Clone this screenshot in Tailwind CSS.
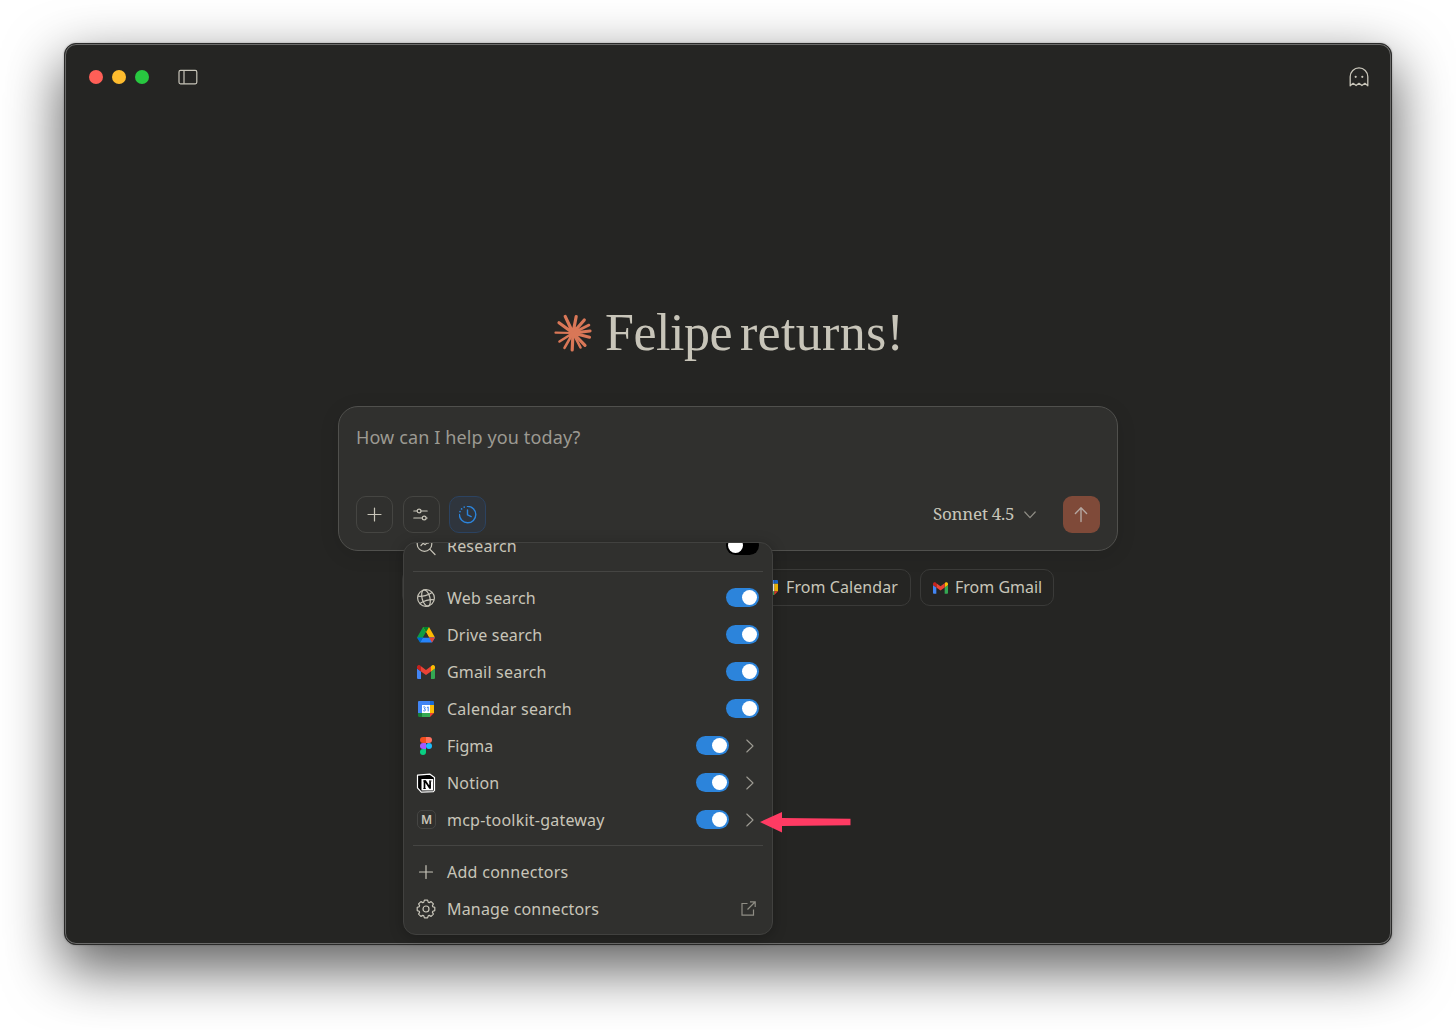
<!DOCTYPE html>
<html lang="en">
<head>
  <meta charset="UTF-8">
  <meta name="viewport" content="width=device-width, initial-scale=1.0">
  <title>Claude</title>
  <script src="https://cdn.jsdelivr.net/npm/@tailwindcss/browser@4"></script>
</head>
<body class="bg-white h-[1030px] overflow-hidden pt-[43px] pl-[64px] font-['Noto_Sans',sans-serif] text-[#c8c5b9]">
  <!-- Shared icons -->
  <svg class="hidden">
    <symbol id="gmail" viewBox="0 0 18 14">
      <path fill="#4285f4" d="M1.3 14H4V6.4L0 3.5v9.2C0 13.4.6 14 1.3 14z"/>
      <path fill="#34a853" d="M14 14h2.7c.7 0 1.3-.6 1.3-1.3V3.5l-4 2.9z"/>
      <path fill="#fbbc04" d="M14 1.3v5.1l4-2.9V2c0-1.7-1.900-2.600-3.200-1.600z"/>
      <path fill="#ea4335" d="M4 6.400V1.300l5 3.700 5-3.700v5.100l-5 3.700z"/>
      <path fill="#c5221f" d="M0 2v1.500l4 2.900V1.300L3.200.4C1.900-.6 0 .3 0 2z"/>
    </symbol>
    <symbol id="calendar" viewBox="0 0 16 16">
      <path fill="#4285f4" d="M1.200 0H12v4H4v8H0V1.200C0 .5.5 0 1.200 0z"/>
      <path fill="#1967d2" d="M12 0h2.800C15.500 0 16 .5 16 1.200V4h-4z"/>
      <path fill="#fbbc04" d="M12 4h4v8h-4z"/>
      <path fill="#34a853" d="M4 12h8v4H4z"/>
      <path fill="#188038" d="M0 12h4v4H1.200C.5 16 0 15.500 0 14.800z"/>
      <path fill="#ea4335" d="M12 12h4l-4 4z"/>
      <path fill="#fff" d="M4 4h8v8H4z"/>
      <path fill="none" stroke="#4285f4" stroke-width="1" d="M5.200 6.300c.5-.8 2.100-.7 2.100.4 0 .8-.7 1.100-1.300 1.100.8 0 1.500.4 1.500 1.200 0 1.200-1.900 1.300-2.400.3M8.900 6.700l1.300-.8V10.400"/>
    </symbol>
    <symbol id="chevron" viewBox="0 0 8 14">
      <path fill="none" stroke="currentColor" stroke-width="1.100" stroke-linecap="round" stroke-linejoin="round" d="M.8 1 7 7 .8 13"/>
    </symbol>
  </svg>

  <div class="relative w-[1328px] h-[902px] rounded-[12px] bg-[#252523] border border-[#2a2a29] shadow-[inset_0_0_0_1px_#6b6b6a,0_0_2px_rgba(0,0,0,0.3),0_22px_56px_3px_rgba(0,0,0,0.62)] flex flex-col">
    <!-- Title bar -->
    <header class="flex items-center h-[65px] pl-[24px] pr-[22px]">
      <div class="flex gap-[9px]">
        <span class="size-[14px] rounded-full bg-[#ff5f57]"></span>
        <span class="size-[14px] rounded-full bg-[#febc2e]"></span>
        <span class="size-[14px] rounded-full bg-[#28c840]"></span>
      </div>
      <svg class="ml-[28.500px] w-[20px] h-[16px]" viewBox="0 0 20 16" fill="none" stroke="#c8c5b9" stroke-width="1.200">
        <rect x="1" y="1.400" width="17.800" height="13.400" rx="1.500"/>
        <path d="M6 1.400v13.400"/>
      </svg>
      <svg class="ml-auto w-[20px] h-[20px]" viewBox="0 0 20 20" fill="none" stroke="#c8c5b9" stroke-width="1.300" stroke-linejoin="round">
        <path d="M1.200 18.800V9.700a8.800 8.800 0 0 1 17.600 0v9.100l-2.900-2.500-3 2.300-2.900-2.300-2.900 2.300-3-2.300z"/>
        <circle cx="6.700" cy="9.800" r="1.100" fill="#c8c5b9" stroke="none"/>
        <circle cx="13.300" cy="9.800" r="1.100" fill="#c8c5b9" stroke="none"/>
      </svg>
    </header>

    <main class="flex flex-col items-center">
      <!-- Greeting -->
      <div class="mt-[194px] h-[60px] w-[348px] flex items-center">
        <svg class="size-[38px] shrink-0 -mt-px" viewBox="0 0 38 38" stroke="#d97757" stroke-width="3.200" stroke-linecap="round">
          <path d="M19 19 1.500 18.700" stroke-width="2.200"/>
          <path d="M19 19 5 8.800M19 19 11.200 2.400M19 19 22.200 2.500M19 19 30.300 6M19 19 36 17M19 19 35.500 23.200M19 19 31 31.400M19 19 18.200 36"/>
          <path d="M19 19 35 11M19 19 26.500 33.500M19 19 10.500 33.800M19 19 5.500 27.500" stroke-width="2.600"/>
        </svg>
        <h1 class="ml-[13px] flex gap-[8px] whitespace-nowrap font-['Liberation_Serif',serif] text-[52px] leading-[60px]">
          <span class="tracking-[-0.500px]">Felipe</span>
          <span class="tracking-[0.300px]">returns!</span>
        </h1>
      </div>

      <!-- Composer -->
      <div class="mt-[43px] w-[780px] h-[145px] rounded-[20px] bg-[#30302e] border border-[#50504d] shadow-[0_4px_20px_rgba(0,0,0,0.1)] flex flex-col px-[17px] pt-[17px] pb-[17px]">
        <p class="text-[18px] leading-[26px] tracking-[0.120px] text-[#9c9a92]">How can I help you today?</p>
        <div class="mt-auto flex items-center">
          <div class="flex gap-[9.500px]">
            <button class="size-[37px] rounded-[10px] border border-[#454542] flex items-center justify-center">
              <svg class="size-[16px]" viewBox="0 0 16 16" stroke="#c8c5b9" stroke-width="1.200" stroke-linecap="round"><path d="M7.500 1v13M1 7.500h13"/></svg>
            </button>
            <button class="size-[37px] rounded-[10px] border border-[#454542] flex items-center justify-center">
              <svg class="size-[16px]" viewBox="0 0 16 16" fill="none" stroke="#c8c5b9" stroke-width="1.200" stroke-linecap="round">
                <path d="M.8 4h3.300M8.100 4h6.100M.8 11h8.400M13.200 11h1"/>
                <circle cx="6.100" cy="4" r="1.900"/>
                <circle cx="11.200" cy="11" r="1.900"/>
              </svg>
            </button>
            <button class="size-[37px] rounded-[10px] border border-[#2c4361] bg-[#2f353d] flex items-center justify-center">
              <svg class="size-[18px]" viewBox="0.5 0.5 18 18" fill="none" stroke="#2c84db" stroke-width="1.400" stroke-linecap="round">
                <path d="M9 .9A8.200 8.200 0 1 1 .9 9"/>
                <path d="M9 4.500V9.300l3.700 1.800"/>
                <path d="M1.500 6.100v0M3.100 3.400v0M5.700 1.600v0" stroke-width="1.700"/>
              </svg>
            </button>
          </div>
          <span class="ml-auto w-[81px] -mt-[2px] whitespace-nowrap font-['Noto_Serif','Liberation_Serif',serif] text-[17px] tracking-[-0.240px] leading-6">Sonnet 4.5</span>
          <svg class="ml-[10px] w-[12px] h-[8px]" viewBox="0 0 12 8" fill="none" stroke="#8f8d85" stroke-width="1.200" stroke-linecap="round" stroke-linejoin="round"><path d="M.8 1 6 6.700 11.200 1"/></svg>
          <button class="ml-[27px] size-[37px] rounded-[9px] bg-[#7f4a39] flex items-center justify-center">
            <svg class="-ml-px w-[14px] h-[16px]" viewBox="0 0 14 16" fill="none" stroke="#b5a7a1" stroke-width="1.400" stroke-linecap="round" stroke-linejoin="round"><path d="M7 14.500V1M1.400 6.500 7 .8l5.600 5.700"/></svg>
          </button>
        </div>
      </div>

      <!-- Suggestions -->
      <div class="mt-[18px] w-[652px] flex gap-[9px] text-[16px] leading-[22px] whitespace-nowrap">
        <div class="flex-1 h-[37px] rounded-[10px] border border-[#3a3a38]"></div>
        <div class="w-[160px] h-[37px] rounded-[10px] border border-[#3a3a38] flex items-center pl-[11px]">
          <svg class="size-[15px] mr-[8px]"><use href="#calendar"/></svg>
          <span class="-mt-[2px] tracking-[0.080px]">From Calendar</span>
        </div>
        <div class="w-[134px] h-[37px] rounded-[10px] border border-[#3a3a38] flex items-center pl-[11.500px]">
          <svg class="w-[15px] h-[12px] mr-[7.500px]"><use href="#gmail"/></svg>
          <span class="-mt-[2px]">From Gmail</span>
        </div>
      </div>
    </main>

    <!-- Connectors menu -->
    <div class="absolute left-[338px] top-[498px] w-[370px] h-[393px] rounded-[13px] bg-[#30302e] border border-[#41413f] overflow-hidden shadow-[0_2px_14px_rgba(0,0,0,0.25)] text-[16px] tracking-[0.180px] whitespace-nowrap">
      <div class="-mt-[16px] flex flex-col">
        <div class="h-[37px] flex items-center pl-[12px] pr-[13px]">
          <svg class="size-[20px] mr-[11px]" viewBox="0 0 20 20" fill="none" stroke="#c8c5b9" stroke-width="1.200" stroke-linecap="round" stroke-linejoin="round"><circle cx="8.500" cy="8" r="7.300"/><path d="m14 13.300 5 5.200M5 9.500l2.200-2.300 2 1.500 2.800-3M9.800 5.500H12v2"/></svg>
          <span>Research</span>
          <span class="ml-auto w-[33px] h-[19px] rounded-full bg-black flex items-center px-[2px]"><span class="size-[15px] rounded-full bg-white"></span></span>
        </div>
        <div class="h-px mx-[9px] my-[7px] bg-[#454543]"></div>
        <div class="h-[37px] flex items-center pl-[12px] pr-[13px]">
          <svg class="size-[20px] mr-[11px]" viewBox="0 0 20 20" fill="none" stroke="#c8c5b9" stroke-width="1.200"><circle cx="10" cy="10" r="8.400"/><g transform="rotate(-15 10 10)"><ellipse cx="10" cy="10" rx="3.900" ry="8.400"/><path d="M2.700 6.200c4 1.700 10.600 1.700 14.600 0M2.700 13.800c4-1.700 10.600-1.700 14.600 0"/></g></svg>
          <span>Web search</span>
          <span class="ml-auto w-[33px] h-[19px] rounded-full bg-[#2c84db] flex items-center justify-end px-[2px]"><span class="size-[15px] rounded-full bg-white"></span></span>
        </div>
        <div class="h-[37px] flex items-center pl-[13px] pr-[13px]">
          <svg class="w-[18px] h-[16px] mr-[12px]" viewBox="0 0 18 16"><path fill="#0f9d43" d="M6 0h6L9 5.300 3.200 15.600 0 10.400z"/><path fill="#ffba00" d="M6 0h6l6 10.400h-6z"/><path fill="#2684fc" d="M5.900 10.400H18l-3 5.200H3z"/><path fill="#00832d" d="M6 0h6L9 5.300z"/><path fill="#ea4335" d="M12 10.400h6l-3 5.200z"/><path fill="#0066da" d="M0 10.400h6l-3 5.200z"/><path fill="#30302e" d="m9 5.300 3 5.100H6z"/></svg>
          <span>Drive search</span>
          <span class="ml-auto w-[33px] h-[19px] rounded-full bg-[#2c84db] flex items-center justify-end px-[2px]"><span class="size-[15px] rounded-full bg-white"></span></span>
        </div>
        <div class="h-[37px] flex items-center pl-[13px] pr-[13px]">
          <svg class="w-[18px] h-[14px] mr-[12px]"><use href="#gmail"/></svg>
          <span>Gmail search</span>
          <span class="ml-auto w-[33px] h-[19px] rounded-full bg-[#2c84db] flex items-center justify-end px-[2px]"><span class="size-[15px] rounded-full bg-white"></span></span>
        </div>
        <div class="h-[37px] flex items-center pl-[14px] pr-[13px]">
          <svg class="size-[16px] mr-[13px]"><use href="#calendar"/></svg>
          <span class="tracking-[0.250px]">Calendar search</span>
          <span class="ml-auto w-[33px] h-[19px] rounded-full bg-[#2c84db] flex items-center justify-end px-[2px]"><span class="size-[15px] rounded-full bg-white"></span></span>
        </div>
        <div class="h-[37px] flex items-center pl-[16px] pr-[18px]">
          <svg class="w-[12px] h-[18px] mr-[15px]" viewBox="0 0 12 18"><path fill="#f24e1e" d="M3 0h3v6H3a3 3 0 0 1 0-6z"/><path fill="#ff7262" d="M6 0h3a3 3 0 0 1 0 6H6z"/><path fill="#a259ff" d="M3 6h3v6H3a3 3 0 0 1 0-6z"/><circle fill="#1abcfe" cx="9" cy="9" r="3"/><path fill="#0acf83" d="M3 12h3v3a3 3 0 1 1-3-3z"/></svg>
          <span class="tracking-normal">Figma</span>
          <span class="ml-auto w-[33px] h-[19px] rounded-full bg-[#2c84db] flex items-center justify-end px-[2px]"><span class="size-[15px] rounded-full bg-white"></span></span>
          <svg class="ml-[17px] w-[8px] h-[14px] text-[#9c9a92]"><use href="#chevron"/></svg>
        </div>
        <div class="h-[37px] flex items-center pl-[12px] pr-[18px]">
          <svg class="size-[20px] mr-[11px]" viewBox="0 0 20 20"><path fill="#000" stroke="#fff" stroke-width="1.200" stroke-linejoin="round" d="M1.500 2.200 14 1.200l4.500 3.200v13l-1.200 1.300-12 .5-3.800-4.400z"/><path fill="#fff" d="M5.500 6.100h11.700v11.400H5.500z"/><path fill="none" stroke="#000" stroke-width="1.700" d="M8.500 15.300V8.200h.9l4.300 6.600h.4V8.200"/><path stroke="#000" stroke-width="1" d="M7.300 8h2.300M7.300 15.500h2.500M13 8h2.500"/></svg>
          <span>Notion</span>
          <span class="ml-auto w-[33px] h-[19px] rounded-full bg-[#2c84db] flex items-center justify-end px-[2px]"><span class="size-[15px] rounded-full bg-white"></span></span>
          <svg class="ml-[17px] w-[8px] h-[14px] text-[#9c9a92]"><use href="#chevron"/></svg>
        </div>
        <div class="h-[37px] flex items-center pl-[13px] pr-[18px]">
          <span class="size-[19px] mr-[11px] rounded-[5px] border border-[#454543] flex items-center justify-center text-[12px] tracking-normal font-semibold leading-none">M</span>
          <span class="tracking-[0.220px]">mcp-toolkit-gateway</span>
          <span class="ml-auto w-[33px] h-[19px] rounded-full bg-[#2c84db] flex items-center justify-end px-[2px]"><span class="size-[15px] rounded-full bg-white"></span></span>
          <svg class="ml-[17px] w-[8px] h-[14px] text-[#9c9a92]"><use href="#chevron"/></svg>
        </div>
        <div class="h-px mx-[9px] my-[7px] bg-[#454543]"></div>
        <div class="h-[37px] flex items-center pl-[14px]">
          <svg class="size-[16px] mr-[13px]" viewBox="0 0 16 16" stroke="#c8c5b9" stroke-width="1.200" stroke-linecap="round"><path d="M8 1.500v13M1.500 8h13"/></svg>
          <span class="tracking-[0.280px]">Add connectors</span>
        </div>
        <div class="h-[37px] flex items-center pl-[12px] pr-[16px]">
          <svg class="size-[20px] mr-[11px]" viewBox="0 0 20 20" fill="none" stroke="#c8c5b9" stroke-width="1.200" stroke-linejoin="round"><path d="M8.400 1.200h3.200l.6 2 1 .4 1.900-1 2.300 2.300-1 1.900.4 1 2 .6v3.200l-2 .6-.4 1 1 1.900-2.300 2.300-1.900-1-1 .4-.6 2H8.400l-.6-2-1-.4-1.900 1-2.300-2.300 1-1.900-.4-1-2-.6V8.400l2-.6.4-1-1-1.900 2.300-2.300 1.900 1 1-.4z"/><circle cx="10" cy="10" r="3"/></svg>
          <span>Manage connectors</span>
          <svg class="ml-auto size-[15px]" viewBox="0 0 15 15" fill="none" stroke="#8f8d85" stroke-width="1.200"><path d="M6.500 2.500H1v11.700h11.500V8.500M9 .8h5.200V6M14 1 6.500 8.500"/></svg>
        </div>
      </div>
    </div>

    <!-- Pointer arrow -->
    <svg class="absolute left-[695px] top-[768px] w-[92px] h-[22px]" viewBox="0 0 92 22"><path fill="#ff3b63" d="M0 10 22 0v6l68.500.8v6.400L22 14v6.500z"/></svg>
  </div>
</body>
</html>
